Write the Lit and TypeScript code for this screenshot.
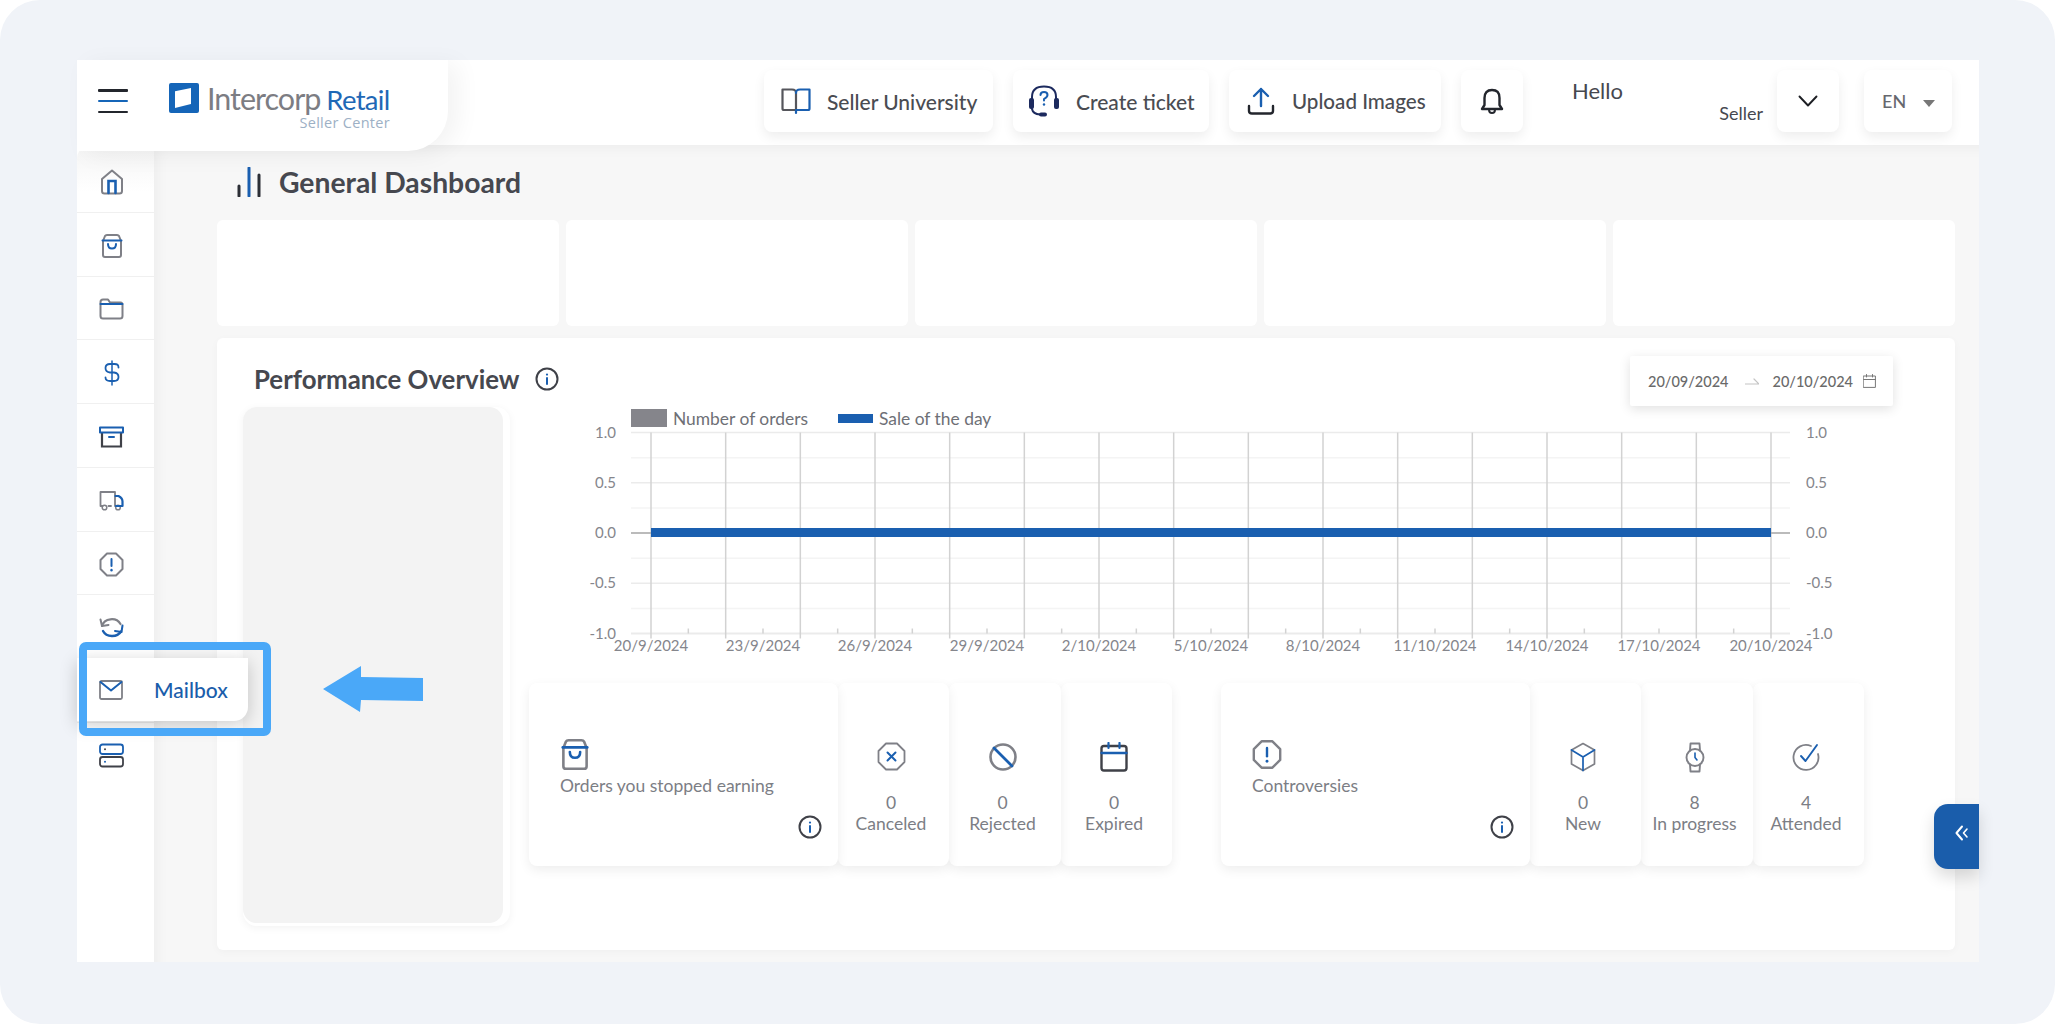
import { LitElement, html, css, svg } from "lit";
import { customElement } from "lit/decorators.js";

const G = "#7f8087";
const B = "#1a5fb0";
const D = "#3f4148";

const ic = (w: number, h: number, vb: string, body: unknown) =>
  html`<svg width=${w} height=${h} viewBox=${vb} fill="none" stroke-linecap="round" stroke-linejoin="round">${body}</svg>`;

const bag = (w = 22, h = 24) => ic(w, h, "0 0 22 24", svg`
  <path d="M2 7 L4 2 Q4.5 1 6 1 H16 Q17.500 1 18 2 L20 7 V21 Q20 23 18 23 H4 Q2 23 2 21 Z" stroke=${G} stroke-width="2"/>
  <path d="M1.500 6.500 H20.500" stroke=${B} stroke-width="2"/>
  <path d="M7 10 Q7 14.500 11 14.500 Q15 14.500 15 10" stroke=${B} stroke-width="2"/>`);

const alert = (w = 25, h = 25) => ic(w, h, "0 0 25 25", svg`
  <path d="M8 1.500 H17 L23.500 8 V17 L17 23.500 H8 L1.500 17 V8 Z" stroke=${G} stroke-width="2"/>
  <path d="M12.500 7 V14" stroke=${B} stroke-width="2"/>
  <path d="M12.500 18 V18.200" stroke=${B} stroke-width="2.400"/>`);

const info = () => ic(24, 24, "0 0 24 24", svg`
  <circle cx="12" cy="12" r="10.500" stroke=${D} stroke-width="2"/>
  <path d="M12 11 V17" stroke=${B} stroke-width="2"/>
  <path d="M12 7.500 V7.600" stroke=${B} stroke-width="2.200"/>`);

const navIcons = [
  ic(24, 26, "0 0 24 26", svg`
    <path d="M2 10 L12 1.500 L22 10 V22 Q22 24.500 19.500 24.500 H4.500 Q2 24.500 2 22 Z" stroke=${G} stroke-width="2"/>
    <path d="M8.500 24 V12 H15.500 V24" stroke=${B} stroke-width="2.600" stroke-linejoin="miter"/>`),
  bag(),
  ic(25, 22, "0 0 25 22", svg`
    <path d="M1.500 4 Q1.500 1.500 4 1.500 H9 L11 4.500 H21.500 Q23.500 4.500 23.500 7 V18 Q23.500 20.500 21 20.500 H4 Q1.500 20.500 1.500 18 Z" stroke=${G} stroke-width="2"/>
    <path d="M1.500 6 H23.500" stroke=${B} stroke-width="2"/>`),
  ic(16, 26, "0 0 16 26", svg`
    <path d="M14.500 7.500 Q14.500 4 10.500 4 H6 Q1.500 4 1.500 8 Q1.500 12 6 12.500 H10 Q14.500 13 14.500 17 Q14.500 21 10 21 H6 Q1.500 21 1.500 17.500" stroke=${B} stroke-width="1.800"/>
    <path d="M8 1 V25" stroke=${B} stroke-width="1.500"/>`),
  ic(25, 22, "0 0 25 22", svg`
    <path d="M3 7 V20.500 H22 V7" stroke=${D} stroke-width="2.200" stroke-linejoin="miter"/>
    <rect x="1" y="1.500" width="23" height="5" stroke=${B} stroke-width="2"/>
    <path d="M10 11 H15" stroke=${B} stroke-width="2"/>`),
  ic(25, 20, "0 0 25 20", svg`
    <path d="M16 15 V1 H1.500 V15 H3.500" stroke=${G} stroke-width="1.800"/>
    <path d="M9.500 15 H12" stroke=${G} stroke-width="1.800"/>
    <circle cx="5.500" cy="16.500" r="2.300" stroke=${G} stroke-width="1.500"/>
    <circle cx="19" cy="16.500" r="2.300" stroke=${G} stroke-width="1.500"/>
    <path d="M16.500 5 H19.500 Q23.500 7 23.500 10.500 V15 H17" stroke=${B} stroke-width="2.200"/>`),
  alert(),
  ic(25, 22, "0 0 25 22", svg`
    <path d="M3 9 A10 9 0 0 1 21.500 7" stroke=${G} stroke-width="2.200"/>
    <path d="M1.500 2.500 L3 9 L9.500 8" stroke=${G} stroke-width="2"/>
    <path d="M4 14 A10 8.500 0 0 0 22 14.500" stroke=${B} stroke-width="2.400"/>
    <path d="M23.500 8.500 L22.500 15 L16 14" stroke=${B} stroke-width="2"/>`),
];

const mailIcon = ic(24, 20, "0 0 24 20", svg`
  <rect x="1" y="1" width="22" height="18" rx="1.500" stroke=${G} stroke-width="1.800"/>
  <path d="M1.500 2 L12 10.500 L22.500 2" stroke=${B} stroke-width="2"/>`);

const storageIcon = ic(25, 25, "0 0 25 25", svg`
  <rect x="1" y="1.500" width="23" height="9.500" rx="2.500" stroke=${B} stroke-width="1.800"/>
  <rect x="1" y="14" width="23" height="9.500" rx="2.500" stroke=${D} stroke-width="1.800"/>
  <path d="M6 6.200 V6.300" stroke=${D} stroke-width="2"/>
  <path d="M6 18.700 V18.800" stroke=${B} stroke-width="2"/>`);

const statA = [
  { v: "0", l: "Canceled", w: 111, i: ic(29, 29, "0 0 29 29", svg`
      <path d="M9 1.500 H20 L27.500 9 V20 L20 27.500 H9 L1.500 20 V9 Z" stroke=${G} stroke-width="1.800"/>
      <path d="M10.500 10.500 L18.500 18.500 M18.500 10.500 L10.500 18.500" stroke=${B} stroke-width="2"/>`) },
  { v: "0", l: "Rejected", w: 112, i: ic(30, 30, "0 0 30 30", svg`
      <circle cx="15" cy="15" r="12.500" stroke=${G} stroke-width="2.600"/>
      <path d="M6 6 L24 24" stroke=${B} stroke-width="2.800"/>`) },
  { v: "0", l: "Expired", w: 111, i: ic(28, 30, "0 0 28 30", svg`
      <rect x="1.500" y="4" width="25" height="24.500" rx="2.500" stroke=${D} stroke-width="2.400"/>
      <path d="M1.500 11 H26.500" stroke=${B} stroke-width="2.400"/>
      <path d="M8.500 1 V6 M19.500 1 V6" stroke=${B} stroke-width="2.200"/>`) },
];
const statB = [
  { v: "0", l: "New", w: 111, i: ic(26, 30, "0 0 26 30", svg`
      <path d="M13 1.500 L24.500 8 V22 L13 28.500 L1.500 22 V8 Z" stroke=${G} stroke-width="1.700"/>
      <path d="M1.500 8 L13 15 L24.500 8 M13 15 V28.500" stroke=${B} stroke-width="1.700"/>`) },
  { v: "8", l: "In progress", w: 112, i: ic(20, 31, "0 0 20 31", svg`
      <circle cx="10" cy="15.500" r="8.500" stroke=${G} stroke-width="1.900"/>
      <path d="M5 8.500 L5.500 1.500 H14.500 L15 8.500 M5 22.500 L5.500 29.500 H14.500 L15 22.500" stroke=${G} stroke-width="1.900"/>
      <path d="M10 11 V15.500 L12 18" stroke=${B} stroke-width="1.600"/>`) },
  { v: "4", l: "Attended", w: 111, i: ic(29, 30, "0 0 29 30", svg`
      <path d="M19 4 A12.500 12.500 0 1 0 26 12 " stroke=${G} stroke-width="1.800"/>
      <path d="M9 14 L13.500 19 L25 3" stroke=${B} stroke-width="1.900"/>`) },
];

const chart = () => {
  const ox = 529, oy = 407;
  const X0 = 651 - ox, DAY = 1120 / 30;
  const yAt = (v: number) => 533 - oy - v * 100.5;
  const L = 631 - ox, R = 1790 - ox;
  const ys = [1, 0.75, 0.5, 0.25, 0, -0.25, -0.5, -0.75, -1];
  const labelsY = ["1.0", "0.5", "0.0", "-0.5", "-1.0"];
  const dates = ["20/9/2024", "23/9/2024", "26/9/2024", "29/9/2024", "2/10/2024", "5/10/2024", "8/10/2024", "11/10/2024", "14/10/2024", "17/10/2024", "20/10/2024"];
  return svg`<svg class="chart" width="1330" height="276" viewBox="0 0 1330 276">
    <rect x=${L} y="2" width="36" height="18" fill="#85858b"/>
    <text class="lg" x=${673 - ox} y="18">Number of orders</text>
    <rect x=${838 - ox} y="7" width="35" height="9" fill=${B}/>
    <text class="lg" x=${879 - ox} y="18">Sale of the day</text>
    ${ys.map((v, i) => svg`<line x1=${L} x2=${R} y1=${yAt(v)} y2=${yAt(v)} stroke=${i % 2 ? "#f4f4f4" : "#ebebeb"} stroke-width=${v === -1 ? 2 : 1.5}/>`)}
    ${Array.from({ length: 16 }, (_, i) => svg`<line x1=${X0 + i * 2 * DAY} x2=${X0 + i * 2 * DAY} y1=${yAt(1)} y2=${yAt(-1) + 5} stroke="#d2d2d2" stroke-width="1.500"/>`)}
    ${Array.from({ length: 15 }, (_, i) => svg`<line x1=${X0 + (i * 2 + 1) * DAY} x2=${X0 + (i * 2 + 1) * DAY} y1=${yAt(-1) - 5} y2=${yAt(-1)} stroke="#d2d2d2" stroke-width="1.500"/>`)}
    <line x1=${L} x2=${X0} y1=${yAt(0)} y2=${yAt(0)} stroke="#aaaaaa" stroke-width="1.500"/>
    <line x1=${X0 + 1120} x2=${R} y1=${yAt(0)} y2=${yAt(0)} stroke="#aaaaaa" stroke-width="1.500"/>
    <rect x=${X0} y=${528 - oy} width="1120" height="9" fill=${B}/>
    ${labelsY.map((t, i) => svg`
      <text class="ax" x=${616 - ox} y=${yAt(1 - i * 0.5) + 5} text-anchor="end">${t}</text>
      <text class="ax" x=${1806 - ox} y=${yAt(1 - i * 0.5) + 5}>${t}</text>`)}
    ${dates.map((d, i) => svg`<text class="ax" x=${X0 + i * 3 * DAY} y=${646 - oy + 5} text-anchor="middle">${d}</text>`)}
  </svg>`;
};

@customElement("app-root")
export class AppRoot extends LitElement {
  static styles = css`
    :host { display: block; width: 2055px; height: 1024px; background: #fff; font-family: Lato, "Liberation Sans", sans-serif; color: #46484f; }
    * { box-sizing: border-box; }
    svg { display: block; flex: none; }
    .frame { height: 1024px; background: #f0f3f8; border-radius: 40px; padding: 60px 76px 62px 77px; }
    .app { position: relative; height: 902px; display: grid; grid-template-rows: 85px 1fr; background: #fff; }
    header { display: flex; align-items: flex-start; padding-right: 27px; position: relative; z-index: 2; }
    .tile { width: 371px; height: 91px; background: #fff; border-bottom-right-radius: 40px; box-shadow: 10px 4px 24px rgba(0,0,0,.05); display: flex; align-items: flex-start; padding: 28px 0 0 21px; margin-right: auto; }
    .burger { width: 30px; height: 24px; display: flex; flex-direction: column; justify-content: space-between; margin-top: 1px; }
    .burger i { display: block; height: 2.5px; border-radius: 1px; background: #23262d; }
    .burger i:nth-child(2) { background: #1565b8; }
    .logo { margin: -5px 0 0 41px; display: grid; grid-template-columns: 30px minmax(0, 1fr); column-gap: 8px; width: 221px; }
    .wm { white-space: nowrap; font-size: 30.5px; line-height: 30px; color: #7c7d83; letter-spacing: -1px; }
    .wm b { font-weight: 400; color: #1f68b6; font-size: 27.5px; margin-left: 6px; letter-spacing: -.7px; }
    .sc { grid-column: 1 / 3; text-align: right; font: 500 14.5px/15px "Open Sans", sans-serif; color: #9db0c5; margin-top: 0; letter-spacing: .3px; }
    .hb { height: 62px; margin-top: 10px; background: #fff; border-radius: 8px; box-shadow: 0 5px 12px rgba(0,0,0,.07); display: flex; align-items: center; font-size: 21px; font-weight: 500; white-space: nowrap; color: #4a4c52; }
    .hb.b1 { width: 229px; padding-left: 17px; gap: 16px; margin-left: 0; }
    .hb.b2 { width: 196px; padding-left: 15px; gap: 16px; margin-left: 20px; }
    .hb.b3 { width: 212px; padding-left: 18px; gap: 17px; margin-left: 20px; font-size: 20.6px; }
    .hb.b4 { width: 62px; justify-content: center; margin-left: 20px; }
    .user { width: 254px; height: 62px; margin-top: 10px; padding: 9px 14px 0 49px; display: flex; flex-direction: column; font-size: 22px; line-height: 23px; }
    .user span:last-child { align-self: flex-end; font-size: 18px; }
    .hb.b5 { width: 62px; justify-content: center; }
    .hb.b6 { width: 88px; margin-left: 25px; padding-left: 18px; gap: 17px; font-size: 18px; font-weight: 500; color: #66686e; }
    .caret { width: 0; height: 0; border: 6px solid transparent; border-top: 7px solid #777; border-bottom: 0; margin-top: 5px; }
    .body { display: grid; grid-template-columns: 77px 1fr; min-height: 0; }
    nav { background: #fff; padding-top: 4px; position: relative; }
    nav a { display: flex; align-items: center; justify-content: center; height: 63.75px; padding: 3px 8px 0 0; border-bottom: 1.5px solid #f0f0f0; }
    nav a:first-child { background: linear-gradient(180deg, #f4f4f4, #fff 70%); margin-top: -4px; height: 67.75px; padding-top: 7px; border-top-left-radius: 14px; }
    nav a:last-child { border-bottom: 0; padding-top: 1px; }
    main { background: #f7f7f7; padding: 0 24px 12px 63px; box-shadow: inset 8px 8px 14px -6px rgba(0,0,0,.05); display: flex; flex-direction: column; min-width: 0; }
    .title { height: 75px; display: flex; align-items: center; gap: 16px; padding: 0 0 2px 20px; font-size: 28.3px; font-weight: 700; color: #46484f; }
    .tops { display: grid; grid-template-columns: repeat(5, 1fr); gap: 7px; height: 106px; }
    .tops div { background: #fff; border-radius: 6px; }
    .perf { margin-top: 12px; height: 612px; background: #fff; border-radius: 6px; box-shadow: 0 2px 8px rgba(0,0,0,.03); display: grid; grid-template-rows: 69px 1fr; }
    .ph { display: flex; align-items: flex-start; padding: 0 62px 0 37px; }
    .ph h2 { margin: 26px 0 0; font-size: 25.8px; line-height: 30px; font-weight: 700; color: #46484f; }
    .ph .inf { margin: 29px auto 0 15px; }
    .date { margin-top: 18px; width: 263px; height: 50px; background: #fff; box-shadow: 0 3px 12px rgba(0,0,0,.12); border-radius: 2px; display: flex; align-items: center; padding-left: 18px; font-size: 14.5px; font-weight: 500; color: #6a6a6a; }
    .date .ar { margin: 0 14px 0 16px; }
    .date .cal { margin-left: 10px; }
    .pb { display: grid; grid-template-columns: 267px 1fr; padding-left: 26px; min-height: 0; }
    .pw { height: 519px; border-radius: 14px; background: #fff; box-shadow: 0 2px 8px rgba(0,0,0,.05); padding: 0 7px 3px 0; }
    .pw div { height: 100%; background: #f3f3f3; border-radius: 14px; }
    .rc { padding-left: 19px; }
    .chart .lg { font: 400 17.4px Lato, sans-serif; fill: #6e7076; }
    .chart .ax { font: 400 15px Lato, sans-serif; fill: #85868c; }
    .stats { display: flex; gap: 49px; }
    .grp { display: flex; height: 183px; }
    .main { width: 309px; background: #fff; border-radius: 8px; box-shadow: 0 4px 12px rgba(0,0,0,.07); padding: 56px 0 0 31px; display: flex; flex-direction: column; position: relative; z-index: 4; font-size: 17.5px; color: #7c7e85; }
    .main p { margin: 5px 0 0; line-height: 21px; font-weight: 400; white-space: nowrap; }
    .main .inf { margin: auto 16px 27px 0; align-self: flex-end; }
    .st { background: #fff; border-radius: 8px; box-shadow: 0 4px 12px rgba(0,0,0,.07); padding-right: 5px; display: flex; flex-direction: column; align-items: center; position: relative; font-size: 17.5px; line-height: 21px; color: #7c7e85; }
    .st:nth-child(2) { z-index: 3; }
    .st:nth-child(3) { z-index: 2; }
    .st:nth-child(4) { z-index: 1; }
    .st .icw { height: 50px; margin-top: 59px; }
    .st span { display: block; }
    .hl { position: absolute; left: 2px; top: 582px; width: 192px; height: 94px; border: 8px solid #4aa8f8; border-radius: 7px; z-index: 5; pointer-events: none; }
    .tab { position: absolute; left: 0; top: 598px; width: 171px; height: 63px; background: #fff; border-bottom-right-radius: 14px; box-shadow: 0 4px 18px rgba(0,0,0,.2); z-index: 4; display: flex; align-items: center; padding-left: 22px; gap: 31px; font-size: 21px; font-weight: 500; color: #1a5dab; }
    .arrow { position: absolute; left: 245px; top: 606px; z-index: 5; }
    .tog { position: absolute; right: 0; top: 744px; width: 45px; height: 65px; background: #1a5dab; border-radius: 14px 0 0 14px; box-shadow: 0 8px 16px rgba(0,0,0,.14); z-index: 5; display: flex; align-items: center; padding: 0 0 8px 21px; }
  `;

  private group(title: unknown, label: string, items: typeof statA) {
    return html`<div class="grp">
      <div class="main">${title}<p>${label}</p><span class="inf">${info()}</span></div>
      ${items.map((s) => html`<div class="st" style="width:${s.w}px">
        <div class="icw">${s.i}</div><span>${s.v}</span><span>${s.l}</span>
      </div>`)}
    </div>`;
  }

  render() {
    return html`<div class="frame"><div class="app">
      <header>
        <div class="tile">
          <div class="burger"><i></i><i></i><i></i></div>
          <div class="logo">
            <svg width="30" height="30" viewBox="0 0 30 30">
              <rect width="30" height="30" rx="2" fill="#1565b8"/>
              <path d="M6 8.300 L22 5 V21 L6 25 Z" fill="#fff"/>
            </svg>
            <div class="wm">Intercorp<b>Retail</b></div>
            <div class="sc">Seller Center</div>
          </div>
        </div>
        <div class="hb b1">
          ${ic(30, 28, "0 0 30 28", svg`
            <path d="M15 23 H3 Q1.500 23 1.500 21.500 V2.500 H11 Q15 2.500 15 6 V23" stroke="#55565c" stroke-width="2.200"/>
            <path d="M15 6 Q15 2.500 19 2.500 H28.500 V21.500 Q28.500 23 27 23 H15 V26" stroke=${B} stroke-width="2.200"/>`)}
          Seller University
        </div>
        <div class="hb b2">
          ${ic(32, 32, "0 0 32 32", svg`
            <path d="M4 15 V12 Q4 1.500 16 1.500 Q28 1.500 28 12 V15" stroke="#1c2a5e" stroke-width="2"/>
            <rect x="1" y="13" width="5" height="11" rx="2" fill="#1c2a5e"/>
            <rect x="26" y="13" width="5" height="11" rx="2" fill="#1c2a5e"/>
            <path d="M4 24 Q5 29 12 29.500" stroke="#1c2a5e" stroke-width="2"/>
            <rect x="11" y="27.500" width="8" height="4" rx="2" fill="#1c2a5e"/>
            <path d="M12.500 10 Q12.500 7 16 7 Q19.500 7 19.500 10 Q19.500 12 16 14 V15.500" stroke=${B} stroke-width="2"/>
            <path d="M16 19.500 V19.600" stroke=${B} stroke-width="2.400"/>`)}
          Create ticket
        </div>
        <div class="hb b3">
          ${ic(28, 28, "0 0 28 28", svg`
            <path d="M14 19 V2 M7 9 L14 2 L21 9" stroke=${B} stroke-width="2.400"/>
            <path d="M2 19 V24 Q2 26.500 5 26.500 H23 Q26 26.500 26 24 V19" stroke="#23262d" stroke-width="2.400"/>`)}
          Upload Images
        </div>
        <div class="hb b4">
          ${ic(24, 26, "0 0 24 26", svg`
            <path d="M2 21 H22 L19.500 17 V10 Q19.500 2 12 2 Q4.500 2 4.500 10 V17 Z" stroke="#23262d" stroke-width="2.400"/>
            <path d="M9 21.500 Q9 25 12 25 Q15 25 15 21.500" stroke="#23262d" stroke-width="2"/>`)}
        </div>
        <div class="user"><span>Hello</span><span>Seller</span></div>
        <div class="hb b5">
          ${ic(20, 12, "0 0 20 12", svg`<path d="M1.500 1.500 L10 10.500 L18.500 1.500" stroke="#1d1f24" stroke-width="1.900"/>`)}
        </div>
        <div class="hb b6">EN <i class="caret"></i></div>
      </header>
      <div class="body">
        <nav>
          ${navIcons.map((i) => html`<a>${i}</a>`)}
          <a></a>
          <a>${storageIcon}</a>
        </nav>
        <main>
          <div class="title">
            ${ic(26, 30, "0 0 26 30", svg`
              <path d="M2 19 V29 M22 8 V29" stroke="#2c2f36" stroke-width="3"/>
              <path d="M12 1 V29" stroke=${B} stroke-width="3"/>`)}
            General Dashboard
          </div>
          <div class="tops"><div></div><div></div><div></div><div></div><div></div></div>
          <section class="perf">
            <div class="ph">
              <h2>Performance Overview</h2>
              <span class="inf">${info()}</span>
              <div class="date">
                <span>20/09/2024</span>
                <span class="ar">${ic(14, 8, "0 0 14 8", svg`<path d="M0 7 H14 L9 2" stroke="#c4c4c4" stroke-width="1.200"/>`)}</span>
                <span>20/10/2024</span>
                <span class="cal">${ic(13, 14, "0 0 13 14", svg`
                  <rect x=".6" y="2" width="11.800" height="11.400" stroke="#777" stroke-width="1"/>
                  <path d="M.6 5.500 H12.400 M3.500 .5 V3 M9.500 .5 V3" stroke="#777" stroke-width="1"/>`)}</span>
              </div>
            </div>
            <div class="pb">
              <div class="pw"><div></div></div>
              <div class="rc">
                ${chart()}
                <div class="stats">
                  ${this.group(bag(30, 31), "Orders you stopped earning", statA)}
                  ${this.group(alert(30, 31), "Controversies", statB)}
                </div>
              </div>
            </div>
          </section>
        </main>
      </div>
      <div class="tab">${mailIcon}Mailbox</div>
      <div class="hl"></div>
      <svg class="arrow" width="102" height="48" viewBox="0 0 102 48"><path d="M1 23 L39 0 V11 L101 12 V35 L39 34 L38 46 Z" fill="#4aa8f8"/></svg>
      <div class="tog">
        ${ic(14, 16, "0 0 14 16", svg`
          <path d="M7 1.500 L1.500 8 L7 14.500" stroke="#fff" stroke-width="2"/>
          <path d="M12 4 L8.500 8 L12 12" stroke="#fff" stroke-width="1.600"/>`)}
      </div>
    </div></div>`;
  }
}
